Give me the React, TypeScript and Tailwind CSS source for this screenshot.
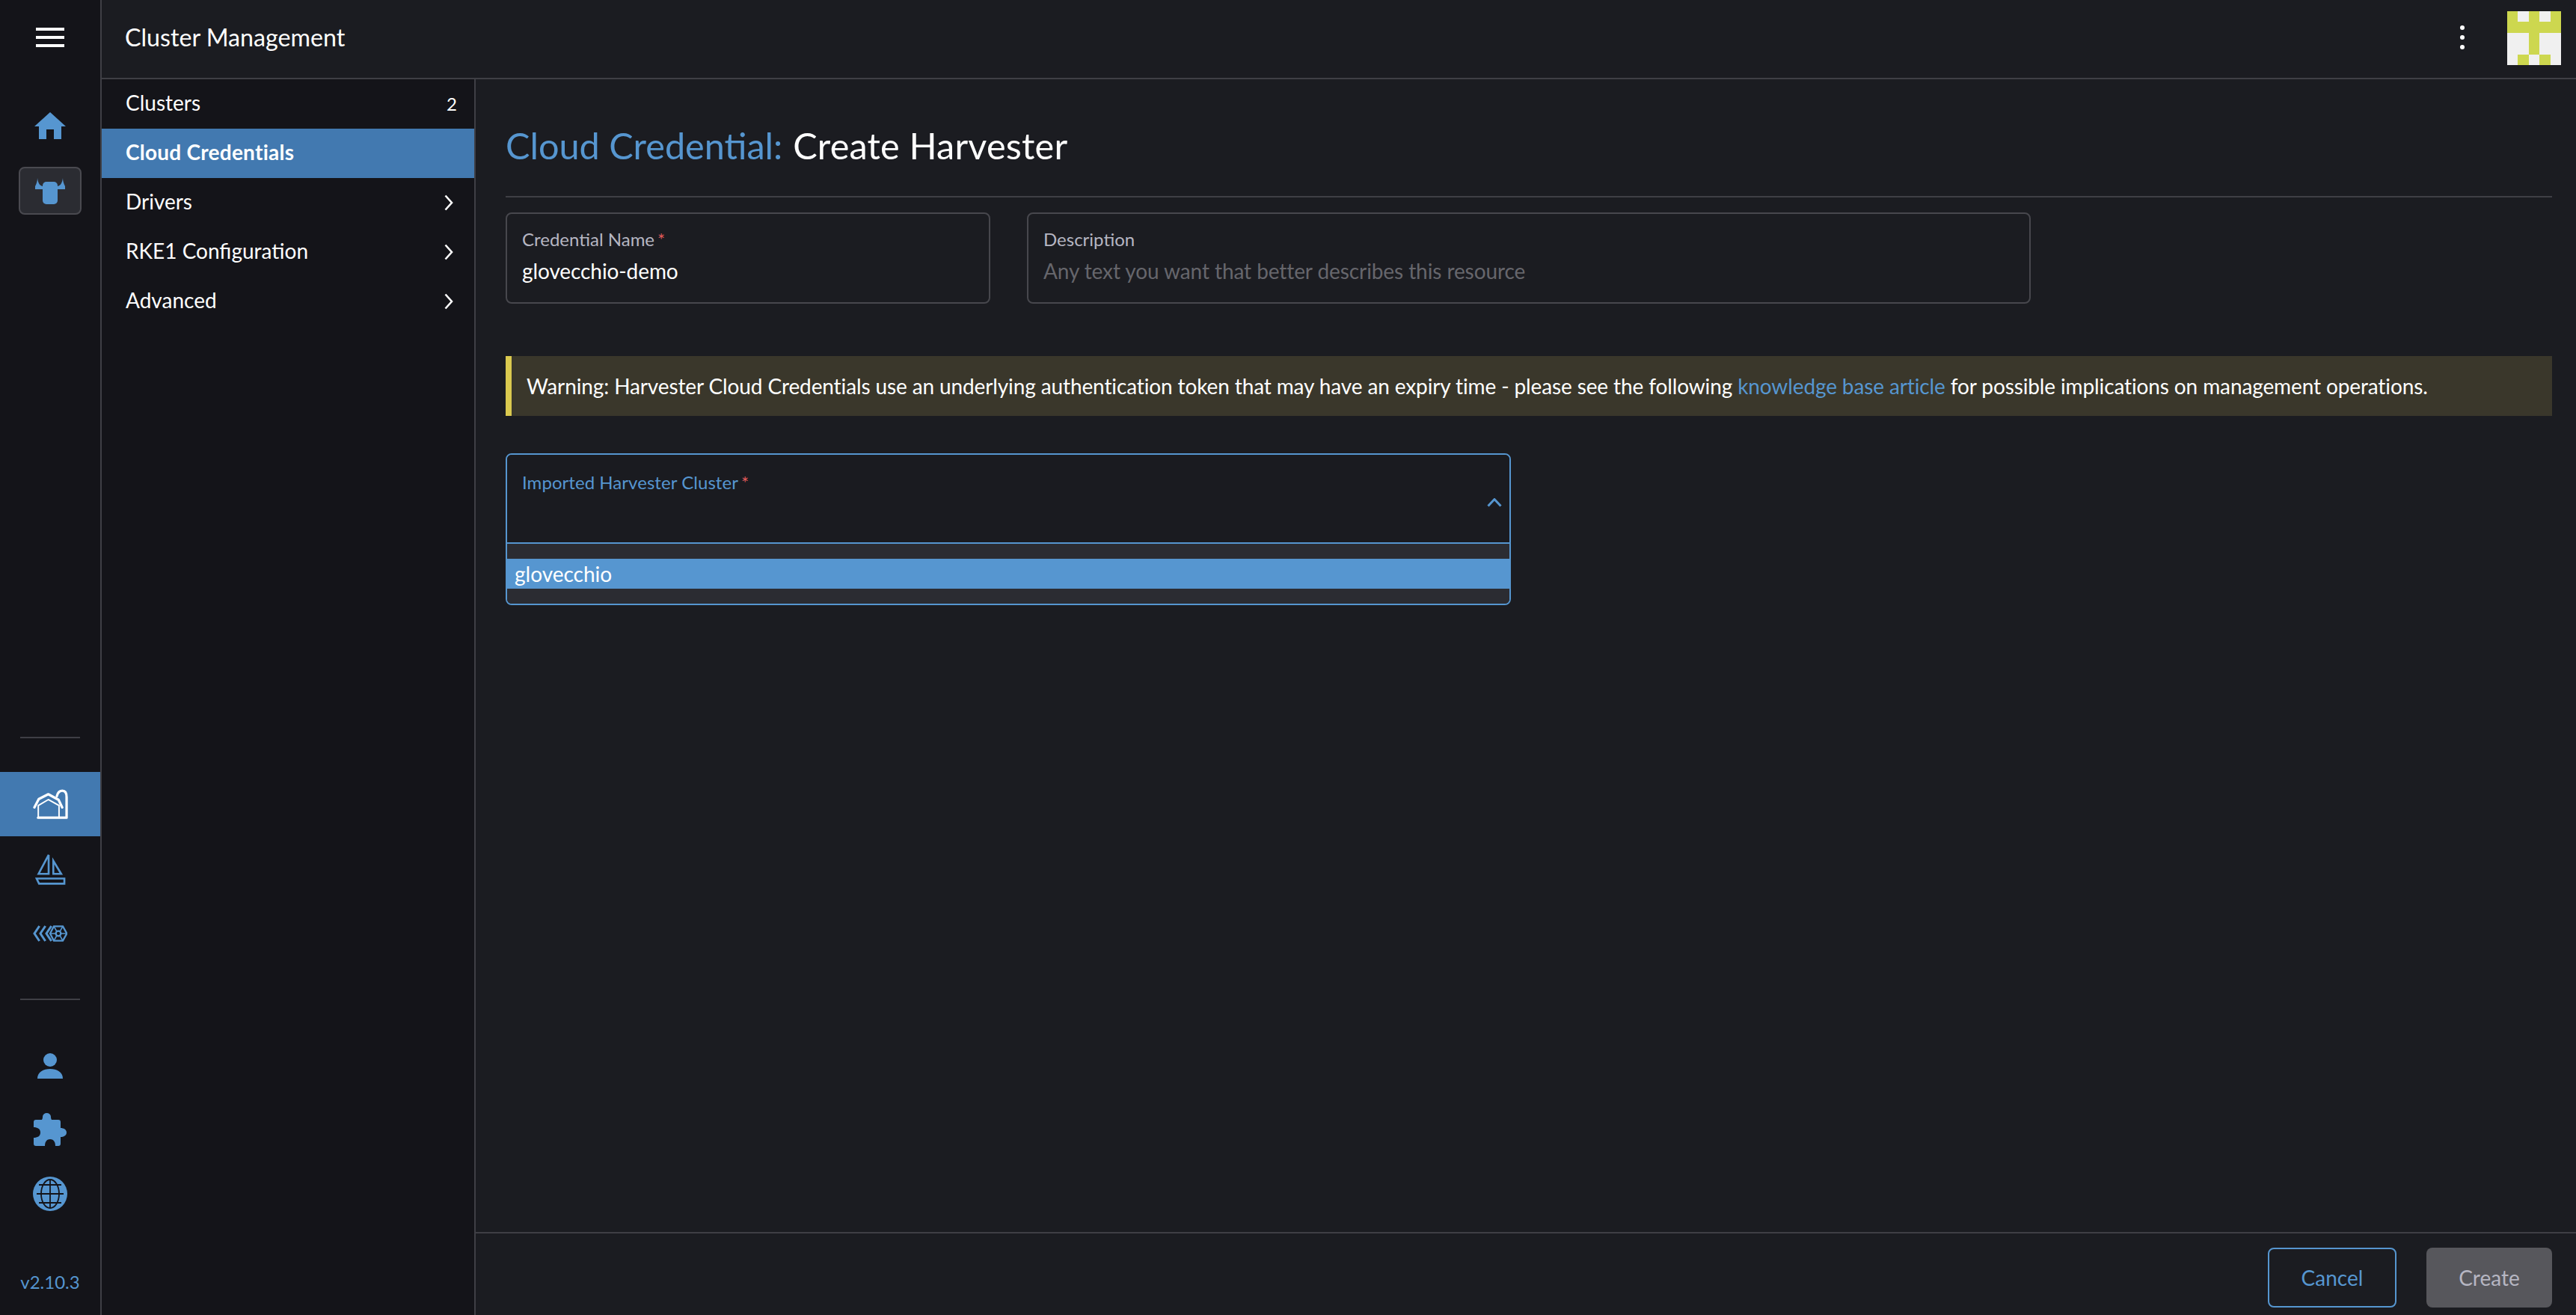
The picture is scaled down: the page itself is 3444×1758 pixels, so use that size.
const navItems = [
    { label: 'Clusters', count: '2' },
    { label: 'Cloud Credentials', active: true },
    { label: 'Drivers', arrow: true },
    { label: 'RKE1 Configuration', arrow: true },
    { label: 'Advanced', arrow: true },
];

// 5x5 identicon, 1 = green
const avatarCells = [1, 0, 1, 0, 1, 1, 1, 1, 1, 1, 0, 0, 1, 0, 0, 0, 0, 1, 0, 0, 0, 1, 0, 1, 0];

function Chevron() {
    return (
        <svg width="12" height="22" viewBox="0 0 12 22" fill="none" className="text-white">
            <path d="M1.500 1.500 10 11l-8.500 9.500" stroke="currentColor" strokeWidth="2.6" />
        </svg>
    );
}

function HomeIcon() {
    return (
        <svg width="42" height="36" viewBox="0 0 42 36" className="text-[#5696d0]">
            <path fill="currentColor" d="M21 0 42 19H36V36H26V23H16V36H6V19H0Z" />
        </svg>
    );
}

function BullIcon() {
    return (
        <svg width="40" height="35" viewBox="0 0 40 35" className="text-[#5696d0]">
            <rect x="10" y="5" width="20" height="30" rx="5" fill="currentColor" />
            <path fill="currentColor" d="M3 0C3 4 2 7 0 11V15H10V11C6 10 4 7 3 0Z" />
            <path fill="currentColor" d="M37 0C37 4 38 7 40 11V15H30V11C34 10 36 7 37 0Z" />
        </svg>
    );
}

function BarnIcon() {
    return (
        <svg width="47" height="41" viewBox="100 72 144 124" fill="none" stroke="white" strokeLinecap="round" strokeLinejoin="round">
            <path strokeWidth="10" d="M106 146 124 112 163 92 205 115 220 146" />
            <path strokeWidth="6" d="M122 186V138L163 114 207 138V186" />
            <path strokeWidth="10" d="M198 100C202 84 212 78 221 78 232 78 238 88 238 104V188H121" />
        </svg>
    );
}

function SailIcon() {
    return (
        <svg width="42" height="46" viewBox="108 320 126 140" fill="none" stroke="#5696d0" strokeWidth="8">
            <path d="M165 338V415H124Z" />
            <path d="M184 362V415H216Z" />
            <path d="M116 434H229V455H126Z" />
        </svg>
    );
}

function FleetIcon() {
    return (
        <svg width="46" height="22" viewBox="102 620 138 64" fill="none" stroke="#5696d0" strokeWidth="9">
            <path d="M128 622 108 652 128 682" />
            <path d="M152 622 132 652 152 682" />
            <path d="M176 622 156 652 176 682" />
            <path strokeWidth="7" d="M186 623H222L238 652 222 681H186L171 652Z" />
            <circle cx="204" cy="652" r="10" strokeWidth="7" />
            <path strokeWidth="5" d="M186 623 198 644M222 623 210 644M186 681 198 660M222 681 210 660M171 652H194M238 652H214" />
        </svg>
    );
}

function PersonIcon() {
    return (
        <svg width="34" height="34" viewBox="0 0 34 34" className="text-[#5696d0]">
            <ellipse cx="17" cy="9" rx="9" ry="9" fill="currentColor" />
            <path fill="currentColor" d="M0 34C0 25 8 21 17 21S34 25 34 34Z" />
        </svg>
    );
}

function PuzzleIcon() {
    return (
        <svg width="44" height="44" viewBox="0 0 44 44" className="text-[#5696d0]">
            <path
                fill="currentColor"
                d="M3 9H11C12 7 12 6 12 5A5.500 5 0 0 1 23 5C23 6 23 7 24 9H33A3 3 0 0 1 36 12V20C40 20 44 22 44 26C44 30 40 32 36 32V41A3 3 0 0 1 33 44H29C29 39 27 35 22 35C17 35 15 39 15 44H3A3 3 0 0 1 0 41V33C5 33 9 31 9 26C9 21 5 19 0 19V12A3 3 0 0 1 3 9Z"
            />
        </svg>
    );
}

function GlobeIcon() {
    return (
        <svg width="46" height="46" viewBox="0 0 46 46">
            <circle cx="23" cy="23" r="23" fill="#5696d0" />
            <g fill="none" stroke="#141419" strokeWidth="1.8">
                <path d="M23 4V42M5 23H41M8 11H38M8 35H38" />
                <ellipse cx="23" cy="23" rx="12" ry="19" />
            </g>
        </svg>
    );
}

function LeftRail() {
    return (
        <aside className="flex w-[136px] shrink-0 flex-col items-center border-r-2 border-[#3f3f45] bg-[#141419]">
            <div className="mt-[37px] flex h-[26px] w-[38px] flex-col justify-between">
                <div className="h-[4px] bg-white" />
                <div className="h-[4px] bg-white" />
                <div className="h-[4px] bg-white" />
            </div>
            <div className="mt-[87px]">
                <HomeIcon />
            </div>
            <div className="mt-[37px] flex h-[64px] w-[84px] items-center justify-center rounded-lg border-2 border-[#4a4a50] bg-[#2b2c32]">
                <BullIcon />
            </div>
            <div className="mt-[698px] h-[2px] w-[80px] bg-[#3f3f45]" />
            <div className="mt-[45px] flex h-[86px] w-full items-center justify-center bg-[#4279b0]">
                <BarnIcon />
            </div>
            <div className="mt-[19px]">
                <SailIcon />
            </div>
            <div className="mt-[54px]">
                <FleetIcon />
            </div>
            <div className="mt-[76px] h-[2px] w-[80px] bg-[#3f3f45]" />
            <div className="mt-[71px]">
                <PersonIcon />
            </div>
            <div className="mt-[46px]">
                <PuzzleIcon />
            </div>
            <div className="mt-[41px]">
                <GlobeIcon />
            </div>
            <div className="mt-[80px] text-[24px] leading-[30px] text-[#5696d0]">v2.10.3</div>
        </aside>
    );
}

function SideNav() {
    return (
        <nav className="w-[500px] shrink-0 border-r-2 border-[#3f3f45] bg-[#141419]">
            <ul>
                {navItems.map((item) => (
                    <li
                        key={item.label}
                        className={`flex h-[66px] items-center justify-between pr-[23px] pl-[32px] text-[28px] text-white ${item.active ? 'bg-[#4279b0] font-bold' : ''}`}
                    >
                        <span className={`pb-[4px] ${item.active ? 'tracking-[0.25px]' : ''}`}>{item.label}</span>
                        {item.count && <span className="text-[24px]">{item.count}</span>}
                        {item.arrow && (
                            <span className="pr-[5px]">
                                <Chevron />
                            </span>
                        )}
                    </li>
                ))}
            </ul>
        </nav>
    );
}

export default function App() {
    return (
        <div className="flex h-[1758px] w-[3444px] overflow-hidden bg-[#1b1c21] font-['Lato',sans-serif] text-white">
            <LeftRail />
            <div className="flex min-w-0 flex-1 flex-col">
                <header className="flex h-[106px] shrink-0 items-center justify-between border-b-2 border-[#3f3f45] pr-[20px] pl-[31px]">
                    <h1 className="pb-[4px] text-[32.2px] leading-none">Cluster Management</h1>
                    <div className="flex items-center gap-[57px]">
                        <div className="mb-[4px] flex flex-col gap-[7px]">
                            <span className="h-[6px] w-[6px] rounded-full bg-white" />
                            <span className="h-[6px] w-[6px] rounded-full bg-white" />
                            <span className="h-[6px] w-[6px] rounded-full bg-white" />
                        </div>
                        <div className="mb-[2px] grid h-[72px] w-[72px] grid-cols-5 grid-rows-5">
                            {avatarCells.map((on, i) => (
                                <div key={i} className={on ? 'bg-[#cdd74f]' : 'bg-[#f0f0f0]'} />
                            ))}
                        </div>
                    </div>
                </header>
                <div className="flex min-h-0 flex-1">
                    <SideNav />
                    <main className="flex min-w-0 flex-1 flex-col">
                        <div className="flex-1 pt-[58px] pr-[32px] pl-[40px]">
                            <h2 className="flex gap-[14px] border-b-2 border-[#3f3f45] pb-[38px] text-[48.6px] leading-[60px]">
                                <span className="text-[#5696d0]">Cloud Credential:</span>
                                <span className="tracking-[0.2px]">Create Harvester</span>
                            </h2>
                            <div className="mt-[20px] flex gap-[49px]">
                                <div className="h-[122px] w-[648px] rounded-lg border-2 border-[#47474d] px-[20px] pt-[18px]">
                                    <div className="text-[24px] leading-[32px] text-[#b6b6c2]">
                                        Credential Name<span className="ml-[4px] text-[#e05a5a]">*</span>
                                    </div>
                                    <div className="mt-[8px] text-[28px] leading-[36px] tracking-[-0.09px]">glovecchio-demo</div>
                                </div>
                                <div className="h-[122px] w-[1342px] rounded-lg border-2 border-[#47474d] px-[20px] pt-[18px]">
                                    <div className="text-[24px] leading-[32px] text-[#b6b6c2]">Description</div>
                                    <div className="mt-[8px] text-[28px] leading-[36px] tracking-[-0.09px] text-[#66666c]">
                                        Any text you want that better describes this resource
                                    </div>
                                </div>
                            </div>
                            <div className="mt-[70px] flex h-[80px] items-center border-l-[8px] border-[#dac94f] bg-[#3a372b] pl-[20px] text-[28px] tracking-[-0.12px]">
                                <p>
                                    Warning: Harvester Cloud Credentials use an underlying authentication token that may have an expiry time - please see the following{' '}
                                    <span className="text-[#5696d0]">knowledge base article</span> for possible implications on management operations.
                                </p>
                            </div>
                            <div className="mt-[50px] w-[1344px] overflow-hidden rounded-lg border-2 border-[#5696d0]">
                                <div className="flex h-[119px] items-start justify-between border-b-2 border-[#5696d0] bg-[#1a1b20] pt-[21px] pr-[10px] pl-[20px]">
                                    <div className="text-[24px] leading-[32px] tracking-[0.05px] text-[#5696d0]">
                                        Imported Harvester Cluster<span className="ml-[4px] text-[#e05a5a]">*</span>
                                    </div>
                                    <svg width="20" height="12" viewBox="0 0 20 12" fill="none" className="mt-[37px]">
                                        <path d="M1.500 10.500 10 1.500l8.500 9" stroke="#5696d0" strokeWidth="3" />
                                    </svg>
                                </div>
                                <div className="bg-[#2b2c32] py-[20px]">
                                    <div className="flex h-[40px] items-center bg-[#5696d0] pl-[10px] text-[28px]">glovecchio</div>
                                </div>
                            </div>
                        </div>
                        <footer className="flex h-[111px] shrink-0 items-start justify-end gap-[40px] border-t-2 border-[#3f3f45] pt-[19px] pr-[32px]">
                            <button className="h-[80px] w-[172px] rounded-lg border-2 border-[#5696d0] text-[28px] text-[#5696d0]">Cancel</button>
                            <button className="h-[80px] w-[168px] rounded-lg bg-[#57575c] text-[28px] text-[#b6b6c2]">Create</button>
                        </footer>
                    </main>
                </div>
            </div>
        </div>
    );
}
